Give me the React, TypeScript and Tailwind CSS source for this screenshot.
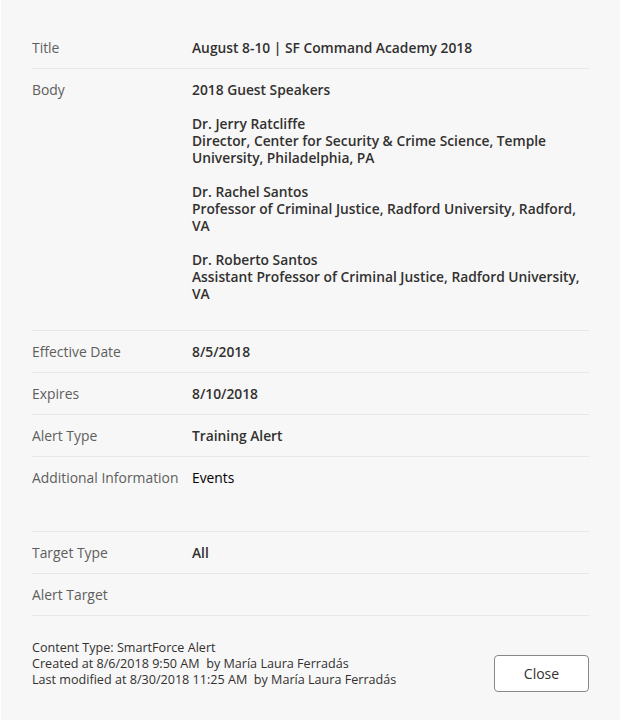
const font = { fontFamily: '"Open Sans", "Noto Sans", Arial, sans-serif' }

interface RowProps {
  label: string
  children?: React.ReactNode
  className?: string
}

function Row({ label, children, className = '' }: RowProps) {
  return (
    <div className={`flex border-b border-[#e8e8e8] pt-[11px] pb-[10px] ${className}`}>
      <div className="w-[160px] shrink-0 text-[13.9px] leading-5 text-[#605e5c]">{label}</div>
      <div className="flex-1 min-w-0 text-[13.8px] leading-5 font-semibold text-[#323130]">{children}</div>
    </div>
  )
}

export default function App() {
  return (
    <div className="w-[620px] h-[720px] bg-[#f7f7f7] border-l border-[#ffffff]" style={font}>
      <div className="px-[31px] pt-[27px]">
        <Row label="Title">August 8-10 | SF Command Academy 2018</Row>
        <Row label="Body" className="pb-[28px]">
          <div className="leading-[17px] pt-[1px]">
            2018 Guest Speakers
            <br />
            <br />
            Dr. Jerry Ratcliffe
            <br />
            Director, Center for Security &amp; Crime Science, Temple University, Philadelphia, PA
            <br />
            <br />
            Dr. Rachel Santos
            <br />
            Professor of Criminal Justice, Radford University, Radford, VA
            <br />
            <br />
            Dr. Roberto Santos
            <br />
            Assistant Professor of Criminal Justice, Radford University, VA
          </div>
        </Row>
        <Row label="Effective Date">8/5/2018</Row>
        <Row label="Expires">8/10/2018</Row>
        <Row label="Alert Type">Training Alert</Row>
        <Row label="Additional Information" className="h-[75px]">
          <span className="font-normal text-black">Events</span>
        </Row>
        <Row label="Target Type">All</Row>
        <Row label="Alert Target" />

        <div className="flex items-end justify-between pt-[24px]">
          <div className="text-[12.6px] leading-4 text-[#323130] whitespace-pre">
            <div>Content Type: SmartForce Alert</div>
            <div>Created at 8/6/2018 9:50 AM  by María Laura Ferradás</div>
            <div>Last modified at 8/30/2018 11:25 AM  by María Laura Ferradás</div>
          </div>
          <button className="w-[95px] h-[37px] mb-[-4px] rounded-[4px] border border-[#8a8886] bg-white text-[14px] text-[#323130]">
            Close
          </button>
        </div>
      </div>
    </div>
  )
}
